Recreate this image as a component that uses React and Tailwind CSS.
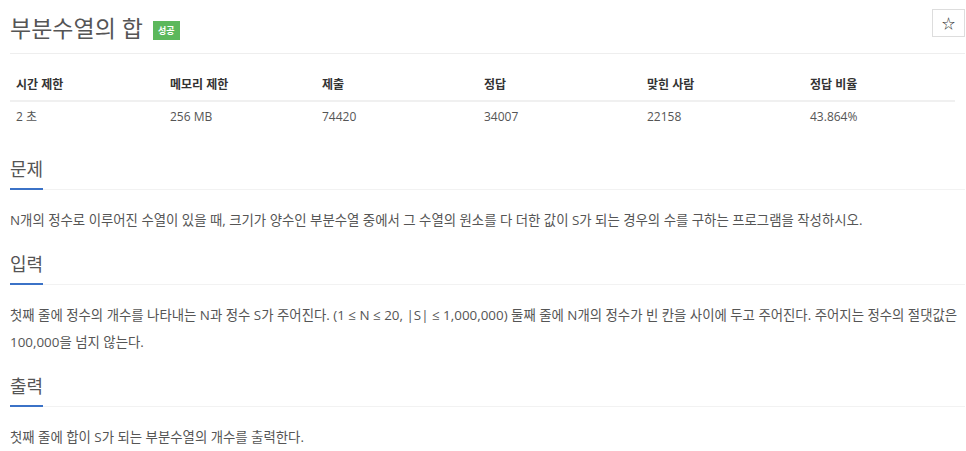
export default function App() {
  const font = { fontFamily: '"Open Sans", "Noto Sans CJK KR", sans-serif' };
  const heads = ["시간 제한", "메모리 제한", "제출", "정답", "맞힌 사람", "정답 비율"];
  const vals = ["2 초", "256 MB", "74420", "34007", "22158", "43.864%"];
  const cols = "grid grid-cols-[154px_152px_162px_163px_163px_1fr]";
  const Section = ({ title, children }) => (
    <div>
      <div className="border-b border-[#f2f2f2] flex">
        <h2 className="text-[18px] leading-[28px] text-[#555] border-b-2 border-[#3b72c7] pb-[5px] mb-[-1px]">{title}</h2>
      </div>
      <div className="pt-[17px] pb-[16px] text-[13.4px] leading-[27px] text-[#555]">{children}</div>
    </div>
  );
  return (
    <div className="bg-white w-[966px] h-[451px] overflow-hidden pl-[10px] pr-[1px]" style={font}>
      <div className="flex items-start justify-between border-b border-[#eee] h-[54px] pt-[9px]">
        <div className="flex items-center gap-[10px] pt-[2px]">
          <h1 className="text-[23px] leading-[34px] text-[#555]">부분수열의 합</h1>
          <span className="bg-[#5cb85c] text-white text-[9px] leading-[19px] px-[5px] mt-[4px] font-bold">성공</span>
        </div>
        <button className="w-[33px] h-[28px] border border-[#ddd] bg-white flex items-center justify-center text-[#333] text-[13px] leading-none">☆</button>
      </div>
      <div className="pt-[16px] pr-[10px]">
        <div className={`${cols} border-b-2 border-[#f0f0f0] h-[32px] items-center text-[12px] font-bold text-[#333]`}>
          {heads.map((h) => (
            <div key={h} className="pl-[6px]">{h}</div>
          ))}
        </div>
        <div className={`${cols} h-[30px] items-center text-[12px] text-[#555]`}>
          {vals.map((v) => (
            <div key={v} className="pl-[6px]">{v}</div>
          ))}
        </div>
      </div>
      <div className="pt-[23px]">
        <Section title="문제">
          N개의 정수로 이루어진 수열이 있을 때, 크기가 양수인 부분수열 중에서 그 수열의 원소를 다 더한 값이 S가 되는 경우의 수를 구하는 프로그램을 작성하시오.
        </Section>
        <Section title="입력">
          첫째 줄에 정수의 개수를 나타내는 N과 정수 S가 주어진다. (1 ≤ N ≤ 20, |S| ≤ 1,000,000) 둘째 줄에 N개의 정수가 빈 칸을 사이에 두고 주어진다. 주어지는 정수의 절댓값은 100,000을 넘지 않는다.
        </Section>
        <Section title="출력">
          첫째 줄에 합이 S가 되는 부분수열의 개수를 출력한다.
        </Section>
      </div>
    </div>
  );
}
